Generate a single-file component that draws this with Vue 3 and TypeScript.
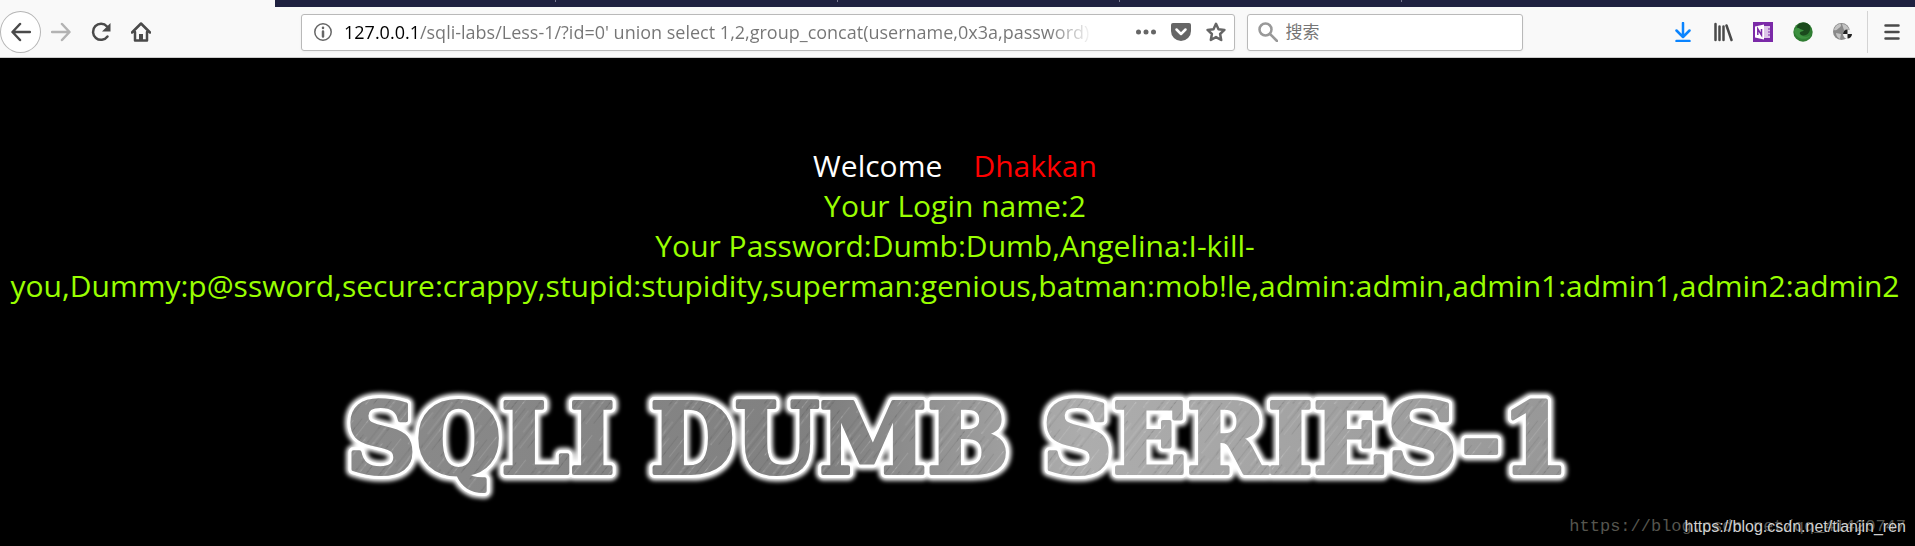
<script setup lang="ts">
import { ref } from 'vue'

const address = ref("127.0.0.1/sqli-labs/Less-1/?id=0' union select 1,2,group_concat(username,0x3a,password) from users")
const query = ref('')
const tabs = [1, 2, 3, 4]
const loginName = '2'
const password =
  'Dumb:Dumb,Angelina:I-kill-you,Dummy:p@ssword,secure:crappy,stupid:stupidity,superman:genious,batman:mob!le,admin:admin,admin1:admin1,admin2:admin2'
const words = [
  { text: 'SQLI', x: 20 },
  { text: 'DUMB', x: 323 },
  { text: 'SERIES-1', x: 714 },
]
</script>

<template>
  <div class="browser">
    <header class="chrome">
      <div class="tabs"><span v-for="tab in tabs" :key="tab" class="tab"></span></div>
      <nav class="toolbar">
        <button class="tool back" aria-label="Back">
          <svg viewBox="0 0 20 20"><path d="M19 10H2M9 2 1.500 10 9 18" class="line" /></svg>
        </button>
        <button class="tool forward" aria-label="Forward">
          <svg viewBox="0 0 20 20"><path d="M1 10h17M11 2l7.500 8L11 18" class="line" /></svg>
        </button>
        <button class="tool" aria-label="Reload">
          <svg viewBox="0 0 20 20"><path d="M16.500 14.500A8 8 0 1 1 16 4.500" class="line" /><path d="M19.500 1v8.500H11z" fill="currentColor" /></svg>
        </button>
        <button class="tool" aria-label="Home">
          <svg viewBox="0 0 20 20"><path d="M1 10.500 10 1.500l9 9M4 10v8.500h12V10" class="line" /><path d="M8 19v-7h4v7z" fill="currentColor" /></svg>
        </button>
        <span class="spacer"></span>
        <div class="field address">
          <button class="inner" aria-label="Site information">
            <svg viewBox="0 0 20 20"><circle cx="10" cy="10" r="8.200" class="thin" /><path d="M10 9.500v5M10 5.800v.2" class="line" /></svg>
          </button>
          <input v-model="address" type="text" aria-label="Address" spellcheck="false" />
          <button class="inner" aria-label="Page actions">
            <svg viewBox="0 0 20 20"><g fill="currentColor"><circle cx="2.500" cy="10" r="2.500" /><circle cx="10" cy="10" r="2.500" /><circle cx="17.500" cy="10" r="2.500" /></g></svg>
          </button>
          <button class="inner" aria-label="Save to Pocket">
            <svg viewBox="0 0 20 20"><path d="M2 1h16a2 2 0 0 1 2 2v6a10 10 0 0 1-20 0V3a2 2 0 0 1 2-2z" fill="currentColor" /><path d="m5.500 7.500 4.500 4.500 4.500-4.500" class="line check" /></svg>
          </button>
          <button class="inner" aria-label="Bookmark">
            <svg viewBox="0 0 20 20"><path d="m10 1.800 2.500 5.400 5.900.7-4.300 4.100 1.100 6-5.200-2.900L4.800 18l1.100-6-4.300-4.100 5.900-.7z" class="line" /></svg>
          </button>
        </div>
        <div class="field search">
          <svg class="lens" viewBox="0 0 20 20"><circle cx="7.500" cy="7.500" r="6" class="line" /><path d="m12 12 7 7" class="line" /></svg>
          <input v-model="query" type="text" placeholder="搜索" aria-label="搜索" />
        </div>
        <span class="spacer"></span>
        <button class="tool download" aria-label="Downloads">
          <svg viewBox="0 0 20 20"><path d="M10 1v13M3.500 8.500 10 15l6.500-6.500M3.500 19h13" class="line" /></svg>
        </button>
        <button class="tool" aria-label="Library">
          <svg viewBox="0 0 20 20"><path d="M2.500 2v16M6.500 4.500V18M10.500 4.500V18M13.500 3.500l5 14.500" class="line" /></svg>
        </button>
        <button class="tool" aria-label="OneNote">
          <svg viewBox="0 0 20 20">
            <path d="M0 0h20v20H0z" fill="#7b2aa8" />
            <path d="M11 4h6v12h-6z" fill="#dcc4e8" />
            <path d="M15 7h3M15 10h3M15 13h3" stroke="#7b2aa8" />
            <path d="m2 4.500 9-2v15l-9-2z" fill="#fff" />
            <path d="M4.800 13V7l3.700 6V7" fill="none" stroke="#7b2aa8" stroke-width="1.500" />
          </svg>
        </button>
        <button class="tool" aria-label="Green extension">
          <svg viewBox="0 0 20 20">
            <circle cx="10" cy="10" r="9.700" fill="#2f7d32" />
            <path d="M4 4c4-5 11-4 13 0 1 4-1 8-4 9s-7 0-8-3 0-3-1-6z" fill="#1b4a1d" />
            <path d="M1 8c1 9 12 12 17 5-4 3-9 2-11-1-1-2 2-3 4-3-1-2-4-1-5-3-2 0-4 0-5 2z" fill="#3d9140" />
          </svg>
        </button>
        <button class="tool" aria-label="Globe extension">
          <svg viewBox="0 0 20 20">
            <circle cx="8.500" cy="9.500" r="8.500" fill="#8a8a8a" />
            <path d="M1 8c1-4 4-6 6-6s1 3-1 4-2 3-5 2zM9 2c4 0 6 3 7 5l-5 1zM3 11l5 1-1 5c-2-1-4-3-4-6z" fill="#c4c4c4" />
            <circle cx="14.500" cy="12" r="4.500" fill="#f2f2f2" />
            <path d="M14.500 12V7.500A4.500 4.500 0 0 0 10 12zM14.500 12v4.500A4.500 4.500 0 0 0 19 12z" fill="#222" />
          </svg>
        </button>
        <span class="divider"></span>
        <button class="tool" aria-label="Menu">
          <svg viewBox="0 0 20 20"><path d="M3.500 3.500h13M3.500 10h13M3.500 16.500h13" class="line" /></svg>
        </button>
      </nav>
    </header>

    <main class="page">
      <div class="result">
        <p class="welcome">Welcome&nbsp;&nbsp;&nbsp; <span class="user">Dhakkan</span></p>
        <p>Your Login name:{{ loginName }}</p>
        <p>Your Password:{{ password }}</p>
      </div>
      <svg class="logo" viewBox="0 0 1260 130" role="img" aria-label="SQLI DUMB SERIES-1">
        <defs>
          <linearGradient id="metal" gradientUnits="userSpaceOnUse" x1="0" y1="0" x2="1260" y2="0">
            <stop offset="0" stop-color="#8b8b8b" />
            <stop offset="0.400" stop-color="#808080" />
            <stop offset="0.600" stop-color="#adadad" />
            <stop offset="1" stop-color="#969696" />
          </linearGradient>
          <pattern id="brushed" width="37" height="60" patternUnits="userSpaceOnUse" patternTransform="rotate(38)">
            <path d="M2 0v40M9 15v40M21 0v30M30 20v40" stroke="#fff" stroke-opacity="0.120" />
            <path d="M5 0v60M15 8v42M26 20v30M34 0v25" stroke="#000" stroke-opacity="0.080" />
          </pattern>
          <filter id="glow" x="-5%" y="-20%" width="110%" height="140%"><feGaussianBlur stdDeviation="2" /></filter>
        </defs>
        <g class="letters">
          <text v-for="word in words" :key="word.text" :x="word.x" y="93" class="halo">{{ word.text }}</text>
          <text v-for="word in words" :key="word.text" :x="word.x" y="93" class="edge">{{ word.text }}</text>
          <text v-for="word in words" :key="word.text" :x="word.x" y="93" class="face">{{ word.text }}</text>
          <text v-for="word in words" :key="word.text" :x="word.x" y="93" class="grain">{{ word.text }}</text>
        </g>
      </svg>
      <div class="marks">
        <span class="mark serif">https://blog.csdn.net/qq_41420747</span>
        <span class="mark sans">https://blog.csdn.net/tianjin_ren</span>
      </div>
    </main>
  </div>
</template>

<style>
html,
body {
  margin: 0;
  background: #000;
}
</style>

<style scoped>
.browser {
  min-height: 100vh;
  display: flex;
  flex-direction: column;
  overflow: hidden;
  font-family: 'Open Sans', 'Noto Sans', 'Noto Sans CJK SC', sans-serif;
}
.chrome {
  background: #f9f9f9;
  border-bottom: 1px solid #ccc;
}
.tabs {
  height: 7px;
  margin-left: 275px;
  display: flex;
  background: #1f2140;
}
.tab {
  width: 281px;
  height: 2px;
  box-sizing: border-box;
  flex: none;
  border-right: 1px solid #777890;
}
.tab + .tab {
  width: 282px;
}
.toolbar {
  display: flex;
  align-items: center;
  height: 50px;
  padding-right: 3px;
}
button {
  border: 0;
  padding: 0;
  background: none;
  color: inherit;
}
svg {
  display: block;
}
.tool {
  flex: none;
  width: 40px;
  height: 40px;
  display: grid;
  place-items: center;
  color: #4a4a4a;
}
.tool svg,
.inner svg,
.lens {
  width: 20px;
  height: 20px;
}
.line {
  fill: none;
  stroke: currentColor;
  stroke-width: 2.5;
  stroke-linecap: round;
  stroke-linejoin: round;
}
.thin {
  fill: none;
  stroke: currentColor;
  stroke-width: 1.5;
}
.check {
  stroke: #fff;
}
.tool.back {
  width: 41px;
  height: 42px;
  border: 1px solid #b5b5b5;
  border-radius: 50%;
  background: #fff;
}
.tool.forward {
  color: #b3b3b3;
}
.tool.download {
  color: #0a84ff;
}
.spacer {
  flex: 0 1 140px;
}
.field {
  display: flex;
  align-items: center;
  box-sizing: border-box;
  height: 37px;
  border: 1px solid #b9b9b9;
  border-radius: 3px;
  background: #fff;
  box-shadow: 0 1px 3px #0000000d;
  color: #737373;
}
.address {
  flex: 934 1 0;
  padding: 0 0 0 3px;
}
.search {
  flex: 266 1 0;
  margin-left: 12px;
  padding-left: 10px;
}
.inner {
  flex: none;
  width: 35px;
  height: 35px;
  display: grid;
  place-items: center;
  color: #666;
}
.lens {
  flex: none;
  color: #999;
}
input {
  flex: 1;
  min-width: 0;
  border: 0;
  padding: 0;
  outline: 0;
  background: none;
  font: 17px/24px 'Open Sans', 'Noto Sans', 'Noto Sans CJK SC', sans-serif;
}
.address input {
  margin-left: 4px;
  margin-right: 36px;
  font-size: 18px;
  color: transparent;
  background: linear-gradient(90deg, #000 76px, #757575 76px, #757575 calc(100% - 45px), transparent 100%);
  background-clip: text;
}
.search input {
  margin-left: 8px;
  color: #333;
}
.search input::placeholder {
  color: #767676;
  opacity: 1;
}
.divider {
  width: 1px;
  height: 42px;
  margin: 0 4px;
  background: #d4d4d4;
}
.page {
  flex: 1;
  display: flex;
  flex-direction: column;
  background: #000;
}
.result {
  margin-top: 88px;
  padding: 0 10px 0 5px;
  color: #9f0;
  font-size: 30px;
  line-height: 40px;
  text-align: center;
}
.result p {
  margin: 0;
}
.result .welcome {
  color: #fff;
}
.welcome .user {
  color: #f00;
}
.logo {
  width: 66%;
  margin: 74px auto 0;
}
.letters {
  font: bold 97px 'DejaVu Serif', serif;
}
.letters text {
  stroke-linejoin: round;
}
.halo {
  fill: #fff;
  stroke: #fff;
  stroke-width: 15;
  filter: url(#glow);
}
.edge {
  fill: #fff;
  stroke: #fff;
  stroke-width: 10;
}
.face {
  fill: url(#metal);
  stroke: url(#metal);
  stroke-width: 4;
}
.grain {
  fill: url(#brushed);
  stroke: url(#brushed);
  stroke-width: 4;
}
.marks {
  display: grid;
  justify-items: end;
  margin-top: auto;
  padding: 0 9px 8px;
}
.mark {
  grid-area: 1 / 1;
  line-height: 22px;
}
.serif {
  color: #55554e;
  font-family: 'Liberation Mono', monospace;
  font-size: 17px;
}
.sans {
  color: #d0d0d0;
  font-family: 'Liberation Sans', sans-serif;
  font-size: 16px;
}
</style>
